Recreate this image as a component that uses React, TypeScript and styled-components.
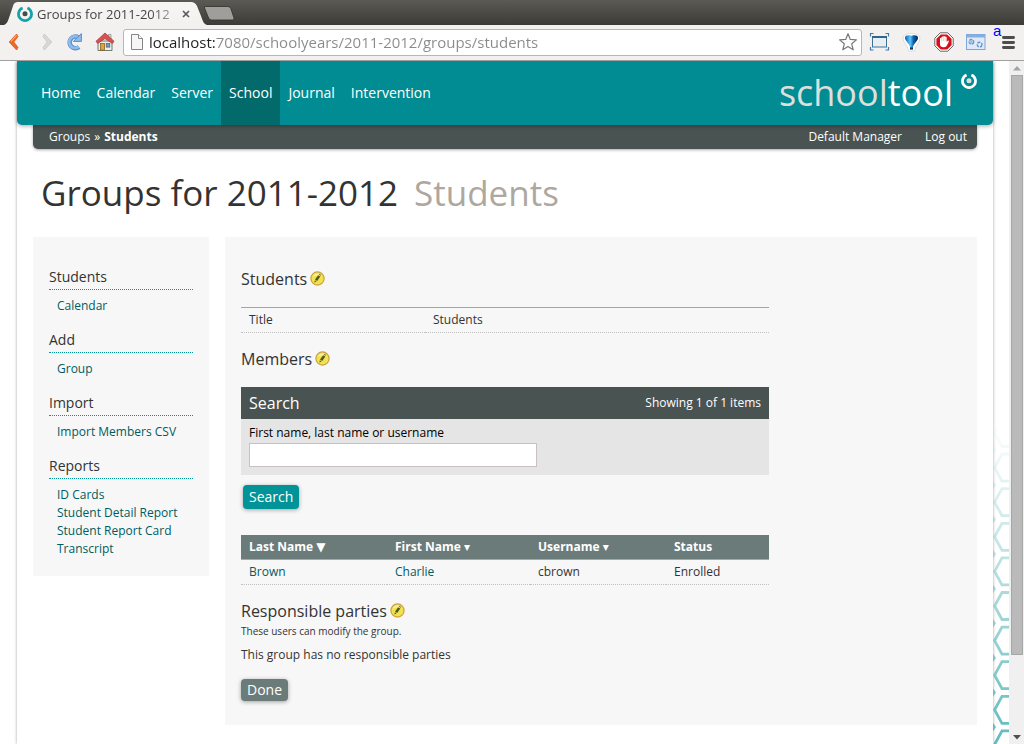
import React from "react";
import styled, { createGlobalStyle } from "styled-components";

const GlobalStyle = createGlobalStyle`
  *, *::before, *::after { box-sizing: border-box; }
  body {
    margin: 0;
    font-family: "Open Sans", "DejaVu Sans", sans-serif;
    font-size: 12px;
    line-height: 18px;
    color: #333333;
    background: #ffffff;
  }
  h1, h2, h3, p, ul { margin: 0; padding: 0; font-weight: 400; }
  a { text-decoration: none; }
`;

/* ---------- browser frame ---------- */

const Window = styled.div`
  display: flex;
  flex-direction: column;
  height: 100vh;
  overflow: hidden;
`;

const TabStrip = styled.div`
  display: flex;
  flex: none;
  height: 25px;
  padding-left: 4px;
  background: linear-gradient(#5b5a54, #3c3b37);
`;

const Tab = styled.div`
  display: flex;
  align-items: center;
  gap: 4px;
  width: 203px;
  padding: 2px 17px 0 13px;
  background: linear-gradient(#f7f6f5, #f2f1f0);
  clip-path: path("M0 25 C3 24 4 21 6 15 L9 6 Q10 2 14 2 L187 2 Q191 2 193 6 L197 16 C199 22 200 24 203 25 Z");
`;

const TabTitle = styled.span`
  flex: 1;
  overflow: hidden;
  white-space: nowrap;
  font-size: 13px;
  line-height: 20px;
  color: #444444;
  mask-image: linear-gradient(to right, #000 80%, rgba(0, 0, 0, 0.3));
`;

const PlainButton = styled.button`
  display: flex;
  flex: none;
  align-items: center;
  justify-content: center;
  padding: 0;
  border: 0;
  background: none;
`;

const NewTab = styled(PlainButton)`
  align-self: flex-start;
  padding-top: 6px;
  margin-left: -4px;
`;

const Toolbar = styled.div`
  display: flex;
  flex: none;
  align-items: center;
  height: 36px;
  padding: 0 4px 1px 6px;
  border-bottom: 1px solid #a2a09e;
  background: #f2f1f0;
`;

const NavButtons = styled.div`
  display: flex;
  gap: 5px;
  width: 117px;

  button { width: 24px; height: 24px; }
`;

const Omnibox = styled.div`
  display: flex;
  flex: 1;
  align-items: center;
  gap: 5px;
  height: 27px;
  padding: 0 3px 0 6px;
  border: 1px solid #b9b7b5;
  border-radius: 3px;
  background: #ffffff;
`;

const Address = styled.input`
  flex: 1;
  min-width: 0;
  height: 24px;
  padding: 0;
  border: 0;
  outline: 0;
  font-family: inherit;
  font-size: 15px;
  color: #8a8a8a;
  background: linear-gradient(to right, #222222 67px, #8a8a8a 67px);
  background-clip: text;
  -webkit-text-fill-color: transparent;
`;

const Extensions = styled.div`
  display: flex;
  gap: 8px;
  padding-left: 6px;

  button { width: 24px; height: 24px; }
`;

const MenuButton = styled(PlainButton)`
  position: relative;
  width: 24px;
  height: 24px;
`;

const MenuBadge = styled.span`
  position: absolute;
  top: -7px;
  left: -3px;
  font-family: "Liberation Sans", sans-serif;
  font-size: 15px;
  line-height: 16px;
  color: #0000ff;
`;

const Viewport = styled.div`
  display: flex;
  flex: 1;
  min-height: 0;
`;

const Canvas = styled.div`
  position: relative;
  flex: 1;
  min-width: 0;
  overflow: hidden;
  padding: 0 16px 0 17px;
`;

const ScrollBar = styled.div`
  display: flex;
  flex: none;
  flex-direction: column;
  width: 15px;
  padding: 0 1px 0 2px;
  background: #f0f0f0;

  button { height: 14px; }
`;

const ScrollThumb = styled.div`
  flex: 580;
  border: 1px solid #a6a6a6;
  background: #bababa;
`;

const ScrollRest = styled.div`
  flex: 75;
`;

const Honeycomb = styled.svg`
  position: absolute;
  right: 0;
  bottom: 0;
`;

/* ---------- page ---------- */

const Page = styled.div`
  position: relative;
  min-height: 100%;
  background: #ffffff;
  box-shadow: 0 0 3px rgba(0, 0, 0, 0.35);
`;

const Header = styled.header`
  position: relative;
  display: flex;
  justify-content: space-between;
  height: 64px;
  padding: 0 16px;
  border-radius: 0 0 5px 5px;
  background: #008c92;
  box-shadow: 0 1px 4px rgba(0, 0, 0, 0.35);
`;

const MainNav = styled.nav`
  display: flex;
`;

const NavLink = styled.a<{ $active?: boolean }>`
  padding: 0 8px;
  font-size: 14px;
  line-height: 64px;
  color: #ffffff;
  background: ${(p) => (p.$active ? "#036a6c" : "transparent")};
`;

const Logo = styled.a`
  display: flex;
  gap: 8px;
  font-size: 36px;
  line-height: 64px;
  color: #dcdfdb;

  b { font-weight: 500; color: #ffffff; }
  svg { margin-top: 12px; }
`;

const Crumbs = styled.div`
  display: flex;
  justify-content: space-between;
  height: 24px;
  margin: 0 16px;
  padding: 0 10px 0 16px;
  border-radius: 0 0 5px 5px;
  line-height: 23px;
  color: #ffffff;
  background: #485352;
  box-shadow: 0 1px 3px rgba(0, 0, 0, 0.35);

  a { color: #ffffff; }
`;

const Trail = styled.div`
  display: flex;
  gap: 4px;
`;

const UserLinks = styled.div`
  display: flex;
  gap: 23px;
`;

const PageTitle = styled.h1`
  display: flex;
  gap: 16px;
  padding: 20px 24px;
  font-size: 35px;
  line-height: 48px;

  span { color: #aea79f; }
`;

const Columns = styled.div`
  display: flex;
  align-items: flex-start;
  gap: 16px;
  padding: 0 16px;
`;

const Sidebar = styled.aside`
  flex: none;
  width: 176px;
  padding: 28px 16px 5px;
  background: #f7f7f7;
`;

const SideHeading = styled.h3`
  border-bottom: 1px dotted #009999;
  font-size: 14px;
  line-height: 24px;
`;

const SideLinks = styled.ul`
  padding: 7px 0 13px 8px;
  list-style: none;
  white-space: nowrap;

  a { color: #005c5f; }
`;

const Content = styled.main`
  flex: 1;
  padding: 30px 16px 24px;
  background: #f7f7f7;
`;

const Column = styled.div`
  max-width: 528px;
`;

const SectionHeading = styled.h2`
  display: flex;
  align-items: center;
  gap: 3px;
  font-size: 16px;
  line-height: 24px;

  button { padding-bottom: 2px; }
`;

const Table = styled.table`
  width: 100%;
  table-layout: fixed;
  border-spacing: 0;
  text-align: left;

  td { height: 25px; padding: 0 8px; border-bottom: 1px dotted #c0c0c0; }
  td a { color: #005c5f; }
`;

const DetailTable = styled(Table)`
  margin: 16px 0 14px;
  border-top: 1px solid #a0a8a0;

  th {
    width: 184px;
    padding: 0 8px;
    border-bottom: 1px dotted #c0c0c0;
    font-weight: 400;
  }
`;

const MemberTable = styled(Table)`
  margin: 26px 0 14px;

  th {
    height: 25px;
    padding: 0 8px;
    border-bottom: 1px solid #a3aba3;
    color: #ffffff;
    background: #6b7b7a;
    white-space: nowrap;
  }
`;

const SearchPanel = styled.section`
  margin: 16px 0 10px;
  background: #e5e5e5;
`;

const SearchBar = styled.div`
  display: flex;
  align-items: center;
  justify-content: space-between;
  height: 32px;
  padding: 0 8px;
  color: #ffffff;
  background: #485352;

  h3 { font-size: 16px; }
`;

const SearchField = styled.label`
  display: flex;
  flex-direction: column;
  gap: 1px;
  padding: 5px 8px 8px;
  color: #000000;

  input {
    width: 288px;
    height: 24px;
    padding: 2px 4px;
    border: 1px solid #c8c0c2;
    border-radius: 0;
    font: inherit;
    background: #ffffff;
  }
`;

const ActionButton = styled.button<{ $muted?: boolean }>`
  display: block;
  height: ${(p) => (p.$muted ? 22 : 24)}px;
  margin-left: ${(p) => (p.$muted ? 0 : 2)}px;
  padding: 0 6px;
  border: 0;
  border-radius: 4px;
  font-family: inherit;
  font-size: 14px;
  line-height: 20px;
  color: #ffffff;
  background: ${(p) => (p.$muted ? "#6b7b7a" : "#009498")};
  box-shadow: 0 1px 4px rgba(0, 0, 0, 0.35);
`;

const Hint = styled.p`
  font-size: 10px;
  line-height: 16px;
`;

const Note = styled.p`
  margin: 6px 0 14px;
  line-height: 20px;
`;

/* ---------- drawings ---------- */

const PencilIcon = () => (
  <svg width="15" height="15" viewBox="0 0 15 15">
    <circle cx="7.5" cy="7.5" r="6.6" fill="#f0e352" stroke="#cf9f3a" strokeWidth="1.2" />
    <path d="M2.6 5.6 A5.4 5.4 0 0 1 12.4 5.6 Q7.5 3.6 2.6 5.6 Z" fill="#f6f0a0" />
    <path d="M4.5 11.6 L4.8 9.2 L6.6 10.4 Z" fill="#55571c" />
    <path d="M5 8.6 L8.2 4.2 L10.3 5.6 L7.2 10 Z" fill="#55571c" />
    <path d="M8.8 3.4 L9.3 2.8 L11.3 4.1 L10.9 4.8 Z" fill="#6c6a2c" />
  </svg>
);

const RingIcon = ({ size, color, dot }: { size: number; color: string; dot: string }) => (
  <svg width={size} height={size} viewBox="0 0 16 16" style={{ flex: "none" }}>
    <path d="M5.6 2 A6.5 6.5 0 1 0 10.4 2" fill="none" stroke={color} strokeWidth="2.8" />
    <circle cx="8" cy="7.8" r="2.5" fill={dot} />
  </svg>
);

const hexRows = Array.from({ length: 10 }, (_, i) => 9 + i * 34.6);

const HoneycombArt = () => (
  <Honeycomb width="16" height="320" viewBox="0 0 16 320" aria-hidden="true">
    <defs>
      <linearGradient id="fade" x1="0" y1="0" x2="0" y2="320" gradientUnits="userSpaceOnUse">
        <stop offset="0" stopColor="#58b7b9" stopOpacity="0" />
        <stop offset="1" stopColor="#58b7b9" stopOpacity="0.95" />
      </linearGradient>
    </defs>
    <path
      d={hexRows.map((y) => `M18 ${y - 13.5} H9 L1.6 ${y} L9 ${y + 13.5} H18`).join(" ")}
      fill="none"
      stroke="url(#fade)"
      strokeWidth="2.8"
    />
    <path d={hexRows.map((y) => `M0 ${y + 13} L3 ${y + 17.3} L0 ${y + 21.6} Z`).join(" ")} fill="url(#fade)" />
  </Honeycomb>
);

const BackIcon = () => (
  <svg width="24" height="24" viewBox="0 0 24 24">
    <path d="M10.6 4 L3.2 12 L10.6 20 L12 17.4 L7.8 12 L12 6.6 Z" fill="#ee6a24" stroke="#d9571a" strokeWidth="0.8" strokeLinejoin="round" />
    <path d="M10.6 5.4 L5 11.4" stroke="#f9a96f" strokeWidth="1.2" />
  </svg>
);

const ForwardIcon = () => (
  <svg width="24" height="24" viewBox="0 0 24 24">
    <path d="M9.4 4 L16.8 12 L9.4 20 L8 17.4 L12.2 12 L8 6.6 Z" fill="#d9d8d6" stroke="#c6c5c3" strokeWidth="0.8" strokeLinejoin="round" />
  </svg>
);

const ReloadIcon = () => (
  <svg width="24" height="24" viewBox="0 0 24 24">
    <path d="M14.4 7.4 A5.8 5.8 0 1 0 15 17" fill="none" stroke="#5a90cb" strokeWidth="4.6" />
    <path d="M14.4 7.4 A5.8 5.8 0 1 0 14.7 16.7" fill="none" stroke="#8fbcea" strokeWidth="2.8" />
    <path d="M17.4 3.6 V11.4 H9.4 Z" fill="#8fbcea" stroke="#5a90cb" strokeWidth="1" />
  </svg>
);

const HomeIcon = () => (
  <svg width="24" height="24" viewBox="0 0 24 24">
    <path d="M5 11 H19 V20.5 H5 Z" fill="#eeeeec" stroke="#77776f" />
    <path d="M15.5 4.5 H18 V9 H15.5 Z" fill="#dddddd" stroke="#888888" strokeWidth="0.7" />
    <path d="M12 3 L21 11.3 L19.4 13.4 L12 8.6 L4.6 13.4 L3 11.3 Z" fill="#d65252" stroke="#b03a3a" strokeWidth="0.8" />
    <rect x="7.5" y="13.5" width="4" height="6.6" fill="#dfa437" stroke="#7d5a13" strokeWidth="0.7" />
    <rect x="13.2" y="13.5" width="3.6" height="3.6" fill="#6b9bd0" stroke="#5a5a55" strokeWidth="0.7" />
  </svg>
);

const PageIcon = () => (
  <svg width="14" height="18" viewBox="0 0 14 18">
    <path d="M1.5 1.5 H8.5 L12.5 5.5 V16.5 H1.5 Z" fill="#f6f6f6" stroke="#858585" />
    <path d="M8.5 1.5 V5.5 H12.5" fill="#ffffff" stroke="#858585" />
  </svg>
);

const StarIcon = () => (
  <svg width="20" height="20" viewBox="0 0 20 20">
    <path
      d="M10 1.8 L12.3 7.4 L18.4 7.9 L13.7 11.8 L15.2 17.8 L10 14.5 L4.8 17.8 L6.3 11.8 L1.6 7.9 L7.7 7.4 Z"
      fill="#ffffff"
      stroke="#777777"
      strokeWidth="1.2"
      strokeLinejoin="round"
    />
  </svg>
);

const CaptureIcon = () => (
  <svg width="24" height="24" viewBox="0 0 24 24">
    <path d="M2.5 6.5 V3.5 H5.5 M17.5 3.5 H20.5 V6.5 M20.5 17 V20 H17.5 M5.5 20 H2.5 V17" fill="none" stroke="#3f7ab3" strokeWidth="1.2" />
    <rect x="4.5" y="7" width="14" height="10" fill="#e9eef4" stroke="#3f7199" />
    <path d="M4 7 H19" stroke="#2f658f" strokeWidth="2" />
  </svg>
);

const BalloonIcon = () => (
  <svg width="24" height="24" viewBox="0 0 24 24">
    <defs>
      <linearGradient id="balloon">
        <stop offset="0" stopColor="#0a5fae" />
        <stop offset="0.4" stopColor="#5cc6fa" />
        <stop offset="0.65" stopColor="#0c62ad" />
        <stop offset="1" stopColor="#02254f" />
      </linearGradient>
    </defs>
    <path d="M3 8 C3 1.8 20 1.8 20 8 C20 12.5 15.6 14.6 14.8 21 H8.6 C7.6 14.6 3 12.5 3 8 Z" fill="#ffffff" stroke="#d4d4d4" strokeWidth="0.8" />
    <path d="M5 7.8 C5.2 5.4 8 4.8 11.5 5.8 C15 4.8 17.8 5.4 18 7.8 C18 11 14.2 13 12.9 17 H10.1 C8.8 13 5 11 5 7.8 Z" fill="url(#balloon)" />
    <rect x="10" y="17.2" width="3" height="2.4" fill="#12355e" />
  </svg>
);

const StopHandIcon = () => (
  <svg width="24" height="24" viewBox="0 0 24 24">
    <path d="M8.2 2.8 H15.8 L21.2 8.2 V15.8 L15.8 21.2 H8.2 L2.8 15.8 V8.2 Z" fill="#ffffff" stroke="#666666" />
    <path d="M8.8 4.4 H15.2 L19.6 8.8 V15.2 L15.2 19.6 H8.8 L4.4 15.2 V8.8 Z" fill="#d4121a" />
    <path
      d="M8 8.2 Q8.8 7.4 9.5 8.2 V7 Q10.3 6 11.2 6.8 Q12 5.4 13 6.8 Q14.2 6.2 14.7 7.6 V12 L16 10.6 Q17.2 10.6 16.8 11.8 L14.6 16 Q13.6 17.4 11.4 17.3 Q8.2 17.2 8 14 Z"
      fill="#ffffff"
    />
    <path d="M9.7 8 V11.4 M11.4 7.4 V11.2 M13.1 7.6 V11.4" stroke="#e8a0a2" strokeWidth="0.5" />
  </svg>
);

const PanelIcon = () => (
  <svg width="24" height="24" viewBox="0 0 24 24">
    <rect x="2.5" y="4.5" width="18.5" height="15" fill="#dfeaf8" stroke="#7fa6d6" />
    <rect x="2.5" y="4.5" width="18.5" height="3" fill="#86aede" />
    <circle cx="7.4" cy="11.8" r="2.4" fill="#a9c5e8" stroke="#6a95cc" strokeWidth="1.2" strokeDasharray="3 1" />
    <circle cx="15.6" cy="14.6" r="2.4" fill="#dfeaf8" stroke="#6a95cc" strokeWidth="1.4" strokeDasharray="3 1" />
  </svg>
);

const MenuIcon = () => (
  <svg width="24" height="24" viewBox="0 0 24 24">
    <path d="M7.4 7.5 H17.6 M7.4 12.5 H17.6 M7.4 17.5 H17.6" stroke="#4d4d4d" strokeWidth="2.8" strokeLinecap="round" />
  </svg>
);

const navItems = ["Home", "Calendar", "Server", "School", "Journal", "Intervention"];

const sideGroups = [
  { title: "Students", links: ["Calendar"] },
  { title: "Add", links: ["Group"] },
  { title: "Import", links: ["Import Members CSV"] },
  { title: "Reports", links: ["ID Cards", "Student Detail Report", "Student Report Card", "Transcript"] },
];

const Chrome = () => (
  <>
    <TabStrip>
      <Tab>
        <RingIcon size={16} color="#12a3ab" dot="#4a4a4a" />
        <TabTitle>Groups for 2011-2012</TabTitle>
        <PlainButton aria-label="Close tab">
          <svg width="8" height="8" viewBox="0 0 8 8">
            <path d="M1 1 L7 7 M7 1 L1 7" stroke="#5a5a5a" strokeWidth="1.7" />
          </svg>
        </PlainButton>
      </Tab>
      <NewTab aria-label="New tab">
        <svg width="32" height="15" viewBox="0 0 32 15">
          <path d="M2.5 0.5 H25 Q27 0.5 27.8 2.5 L31 12 Q31.4 14 29.5 14 H8.5 Q6.5 14 5.6 12 L1.5 2 Q1 0.5 2.5 0.5 Z" fill="#a09e9a" stroke="#2f2e2b" strokeWidth="0.8" />
        </svg>
      </NewTab>
    </TabStrip>
    <Toolbar>
      <NavButtons>
        <PlainButton aria-label="Back"><BackIcon /></PlainButton>
        <PlainButton aria-label="Forward"><ForwardIcon /></PlainButton>
        <PlainButton aria-label="Reload"><ReloadIcon /></PlainButton>
        <PlainButton aria-label="Home page"><HomeIcon /></PlainButton>
      </NavButtons>
      <Omnibox>
        <PageIcon />
        <Address aria-label="Address" defaultValue="localhost:7080/schoolyears/2011-2012/groups/students" />
        <PlainButton aria-label="Bookmark"><StarIcon /></PlainButton>
      </Omnibox>
      <Extensions>
        <PlainButton aria-label="Capture"><CaptureIcon /></PlainButton>
        <PlainButton aria-label="Balloon"><BalloonIcon /></PlainButton>
        <PlainButton aria-label="Block ads"><StopHandIcon /></PlainButton>
        <PlainButton aria-label="Panel"><PanelIcon /></PlainButton>
        <MenuButton aria-label="Menu">
          <MenuIcon />
          <MenuBadge>a</MenuBadge>
        </MenuButton>
      </Extensions>
    </Toolbar>
  </>
);

const EditableHeading = ({ children }: { children: React.ReactNode }) => (
  <SectionHeading>
    {children}
    <PlainButton aria-label="Edit"><PencilIcon /></PlainButton>
  </SectionHeading>
);

export default function App() {
  return (
    <Window>
      <GlobalStyle />
      <Chrome />
      <Viewport>
        <Canvas>
          <Page>
            <Header>
              <MainNav>
                {navItems.map((item) => (
                  <NavLink key={item} href="#" $active={item === "School"}>{item}</NavLink>
                ))}
              </MainNav>
              <Logo href="#">
                <span>school<b>tool</b></span>
                <RingIcon size={16} color="#ffffff" dot="#dcdfdb" />
              </Logo>
            </Header>
            <Crumbs>
              <Trail><a href="#">Groups</a><span>»</span><b>Students</b></Trail>
              <UserLinks>
                <a href="#">Default Manager</a>
                <a href="#">Log out</a>
              </UserLinks>
            </Crumbs>
            <PageTitle>Groups for 2011-2012 <span>Students</span></PageTitle>
            <Columns>
              <Sidebar>
                {sideGroups.map((group) => (
                  <React.Fragment key={group.title}>
                    <SideHeading>{group.title}</SideHeading>
                    <SideLinks>
                      {group.links.map((link) => (
                        <li key={link}><a href="#">{link}</a></li>
                      ))}
                    </SideLinks>
                  </React.Fragment>
                ))}
              </Sidebar>
              <Content>
                <Column>
                  <EditableHeading>Students</EditableHeading>
                  <DetailTable>
                    <tbody>
                      <tr><th scope="row">Title</th><td>Students</td></tr>
                    </tbody>
                  </DetailTable>
                  <EditableHeading>Members</EditableHeading>
                  <SearchPanel>
                    <SearchBar>
                      <h3>Search</h3>
                      <span>Showing 1 of 1 items</span>
                    </SearchBar>
                    <SearchField>
                      First name, last name or username
                      <input type="text" />
                    </SearchField>
                  </SearchPanel>
                  <ActionButton>Search</ActionButton>
                  <MemberTable>
                    <colgroup>
                      <col width="146" />
                      <col width="143" />
                      <col width="136" />
                      <col />
                    </colgroup>
                    <thead>
                      <tr>
                        <th scope="col">Last Name ▼</th>
                        <th scope="col">First Name ▾</th>
                        <th scope="col">Username ▾</th>
                        <th scope="col">Status</th>
                      </tr>
                    </thead>
                    <tbody>
                      <tr>
                        <td><a href="#">Brown</a></td>
                        <td><a href="#">Charlie</a></td>
                        <td>cbrown</td>
                        <td>Enrolled</td>
                      </tr>
                    </tbody>
                  </MemberTable>
                  <EditableHeading>Responsible parties</EditableHeading>
                  <Hint>These users can modify the group.</Hint>
                  <Note>This group has no responsible parties</Note>
                  <ActionButton $muted>Done</ActionButton>
                </Column>
              </Content>
            </Columns>
          </Page>
          <HoneycombArt />
        </Canvas>
        <ScrollBar>
          <PlainButton aria-label="Scroll up">
            <svg width="8" height="5" viewBox="0 0 8 5"><path d="M4 0 L8 4.5 H0 Z" fill="#a3a3a3" /></svg>
          </PlainButton>
          <ScrollThumb />
          <ScrollRest />
          <PlainButton aria-label="Scroll down">
            <svg width="8" height="5" viewBox="0 0 8 5"><path d="M4 4.5 L8 0 H0 Z" fill="#505050" /></svg>
          </PlainButton>
        </ScrollBar>
      </Viewport>
    </Window>
  );
}
